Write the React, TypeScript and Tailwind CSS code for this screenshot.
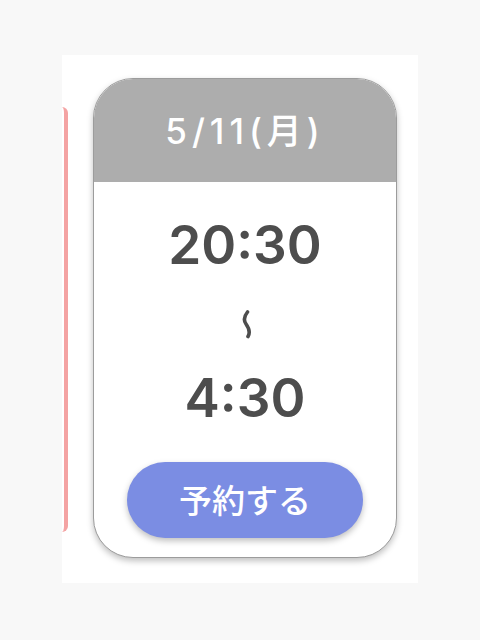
export default function App() {
  return (
    <div className="w-[480px] h-[640px] bg-[#f8f8f8] pt-[55px] pl-[62px]">
      <div className="w-[356px] h-[528px] bg-white flex">
        {/* edge of the previous card */}
        <div className="w-[6px] h-[425px] mt-[52px] border-r-[4px] border-[#f4a3a3] rounded-r-[6px]" />

        <div className="ml-[25px] mt-[23px] w-[304px] h-[480px] rounded-[40px] border border-[#9c9c9c] bg-white overflow-hidden shadow-[0_3px_6px_rgba(0,0,0,0.25)] flex flex-col">
          <div className="h-[103px] bg-[#adadad] flex items-center justify-center pt-[2px]">
            <span className="text-white text-[35px] font-medium tracking-[5px] font-['Inter','Noto_Sans_CJK_JP',sans-serif]">
              5/11(月)
            </span>
          </div>

          <div className="flex flex-col items-center font-['Inter','Liberation_Sans',sans-serif] text-[#4d4d4d]">
            <div className="mt-[35px] h-[56px] text-[53px] leading-[56px] font-semibold">20:30</div>
            <div className="mt-[28px] h-[46px] flex items-center justify-center pl-[4px]">
              <svg width="12" height="32" viewBox="0 0 12 32" fill="none">
                <path
                  d="M6.5 4 C2.5 9, 2.5 12.5, 5 16 S 10 23.5, 7 28.5"
                  stroke="#4d4d4d"
                  strokeWidth="3.6"
                  strokeLinecap="round"
                />
              </svg>
            </div>
            <div className="mt-[23px] h-[56px] text-[53px] leading-[56px] font-semibold">4:30</div>
            <button className="mt-[36px] w-[236px] h-[76px] rounded-full bg-[#7b8de3] text-white text-[33px] font-medium font-['Noto_Sans_CJK_JP',sans-serif] shadow-[0_3px_6px_rgba(0,0,0,0.25)] flex items-center justify-center">
              予約する
            </button>
          </div>
        </div>
      </div>
    </div>
  );
}
